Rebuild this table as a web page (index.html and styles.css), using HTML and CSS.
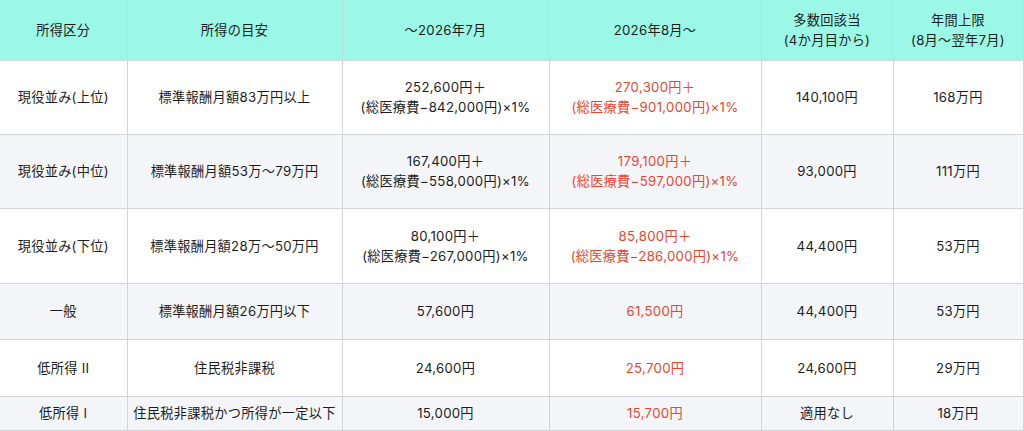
FILE: index.html
```html
<!DOCTYPE html>
<html lang="ja">
<head>
<meta charset="utf-8">
<title>高額療養費</title>
<link rel="stylesheet" href="styles.css">
</head>
<body>
<table class="fee">
  <colgroup>
    <col class="c1"><col class="c2"><col class="c3"><col class="c4"><col class="c5"><col class="c6">
  </colgroup>
  <thead>
    <tr class="h">
      <th>所得区分</th>
      <th>所得の目安</th>
      <th>～2026年7月</th>
      <th>2026年8月～</th>
      <th>多数回該当<br>(4か月目から)</th>
      <th>年間上限<br>(8月～翌年7月)</th>
    </tr>
  </thead>
  <tbody>
    <tr class="r-tall">
      <td>現役並み(上位)</td>
      <td>標準報酬月額83万円以上</td>
      <td>252,600円＋<br>(総医療費−842,000円)×1%</td>
      <td class="red">270,300円＋<br>(総医療費−901,000円)×1%</td>
      <td>140,100円</td>
      <td>168万円</td>
    </tr>
    <tr class="r-tall alt">
      <td>現役並み(中位)</td>
      <td>標準報酬月額53万～79万円</td>
      <td>167,400円＋<br>(総医療費−558,000円)×1%</td>
      <td class="red">179,100円＋<br>(総医療費−597,000円)×1%</td>
      <td>93,000円</td>
      <td>111万円</td>
    </tr>
    <tr class="r-tall3">
      <td>現役並み(下位)</td>
      <td>標準報酬月額28万～50万円</td>
      <td>80,100円＋<br>(総医療費−267,000円)×1%</td>
      <td class="red">85,800円＋<br>(総医療費−286,000円)×1%</td>
      <td>44,400円</td>
      <td>53万円</td>
    </tr>
    <tr class="r-mid alt">
      <td>一般</td>
      <td>標準報酬月額26万円以下</td>
      <td>57,600円</td>
      <td class="red">61,500円</td>
      <td>44,400円</td>
      <td>53万円</td>
    </tr>
    <tr class="r-mid2">
      <td>低所得 II</td>
      <td>住民税非課税</td>
      <td>24,600円</td>
      <td class="red">25,700円</td>
      <td>24,600円</td>
      <td>29万円</td>
    </tr>
    <tr class="r-short alt">
      <td>低所得 I</td>
      <td>住民税非課税かつ所得が一定以下</td>
      <td>15,000円</td>
      <td class="red">15,700円</td>
      <td>適用なし</td>
      <td>18万円</td>
    </tr>
  </tbody>
</table>
</body>
</html>
```
FILE: styles.css
```css
html, body {
  margin: 0;
  padding: 0;
  background: #ffffff;
}
.fee {
  width: 1023px;
  table-layout: fixed;
  border-collapse: collapse;
  font-family: Inter, "Noto Sans CJK JP", sans-serif;
  font-size: 13.2px;
  line-height: 20px;
  letter-spacing: 0.3px;
  color: #1c1c1c;
}
.c1 { width: 127px; }
.c2 { width: 215px; }
.c3 { width: 207px; }
.c4 { width: 212px; }
.c5 { width: 132px; }
.c6 { width: 130px; }
.fee th, .fee td {
  border: 1px solid #d2d4d8;
  padding: 0;
  text-align: center;
  vertical-align: middle;
  font-weight: 400;
}
.fee th:first-child, .fee td:first-child {
  border-left: none;
}
.fee thead th {
  background: #9bf8e6;
  border-top: none;
  border-color: #c6dcd8;
  border-bottom-color: #d2d4d8;
}
.h { height: 60px; }
.r-tall { height: 74px; }
.r-tall3 { height: 75px; }
.r-mid { height: 56px; }
.r-mid2 { height: 57px; }
.r-short { height: 34px; }
.alt td { background: #f4f5f9; }
.red { color: #e8452f; }
```
